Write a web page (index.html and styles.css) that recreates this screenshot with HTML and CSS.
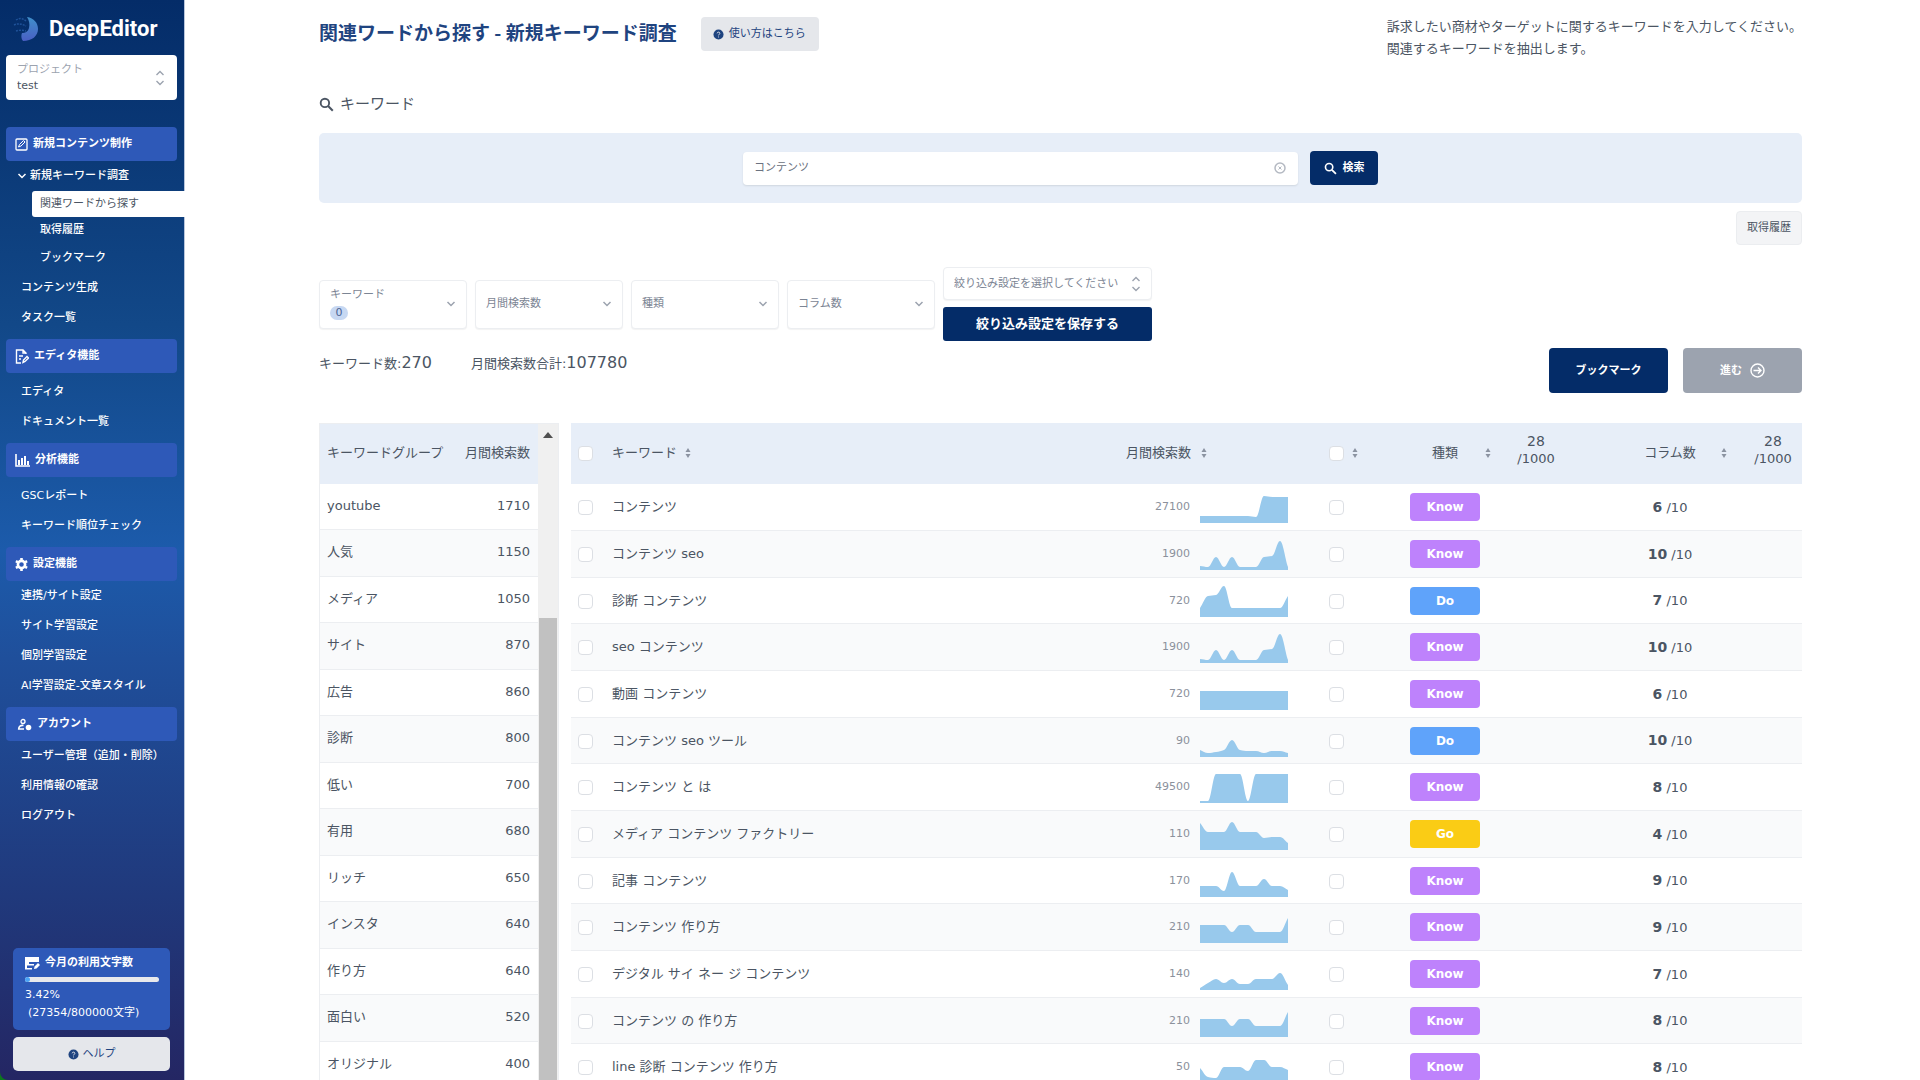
FILE: index.html
```html
<!DOCTYPE html>
<html lang="ja">
<head>
<meta charset="utf-8">
<title>DeepEditor - 新規キーワード調査</title>
<meta name="viewport" content="width=device-width, initial-scale=1">
<link rel="stylesheet" href="styles.css">
</head>
<body>
<svg class="sprite" aria-hidden="true">
  <symbol id="i-updown" viewBox="0 0 10 16"><path d="M1.5 5 5 1.500 8.500 5M1.500 11 5 14.500 8.500 11" fill="none" stroke="currentColor" stroke-width="1.400"/></symbol>
  <symbol id="i-chevron" viewBox="0 0 10 10"><path d="M1.500 3 5 6.500 8.500 3" fill="none" stroke="currentColor" stroke-width="1.500"/></symbol>
  <symbol id="i-search" viewBox="0 0 16 16"><circle cx="6.300" cy="6.300" r="4.500" fill="none" stroke="currentColor" stroke-width="2"/><path d="m9.700 9.700 5 5" stroke="currentColor" stroke-width="2.200"/></symbol>
  <symbol id="i-help" viewBox="0 0 12 12"><circle cx="6" cy="6" r="5.500" fill="currentColor"/><path d="M4.500 4.700C4.600 3 7.500 3 7.500 4.700 7.500 5.700 6 5.800 6 7M6 8.200v1" fill="none" stroke="#e5e7eb" stroke-width="1"/></symbol>
  <symbol id="i-sort" viewBox="0 0 8 12"><path d="M4 1 6.500 5h-5zM4 11 6.500 7h-5z" fill="currentColor"/></symbol>
</svg>
<div class="layout">
  <aside class="sidebar">
    <a class="logo" href="#">
      <svg width="28" height="28" viewBox="0 0 28 28" aria-hidden="true">
        <defs><linearGradient id="lg" x1="0" y1="0" x2="0" y2="1"><stop offset="0" stop-color="#3f8fca"/><stop offset="1" stop-color="#4a5fc4"/></linearGradient></defs>
        <path d="M15 2c7 1 11 6 11 12 0 7-6 12-15 12-2-2-2-6-1-8 3 0 6-1 7-5 1-4 0-8-2-11z" fill="url(#lg)"/>
        <path d="M4 5c3-2 7-2 10 1M2 10c4-2 8-1 12 1M4 16c3-1 7-1 10 0" fill="none" stroke="#1f5299" stroke-width="1.500" stroke-dasharray="2 1"/>
      </svg>
      <span>DeepEditor</span>
    </a>
    <div class="project">
      <label for="project">プロジェクト</label>
      <select id="project"><option>test</option></select>
      <svg class="project-icon" width="10" height="16"><use href="#i-updown"/></svg>
    </div>
    <nav class="menu">
      <section class="group">
        <h2><svg width="13" height="13" viewBox="0 0 13 13"><rect x="1" y="1" width="11" height="11" rx="1" fill="none" stroke="currentColor" stroke-width="1.300"/><path d="m3.500 9 1-2.500 4-4 1.500 1.500-4 4z" fill="none" stroke="currentColor"/></svg>新規コンテンツ制作</h2>
        <a class="parent" href="#"><svg width="10" height="10"><use href="#i-chevron"/></svg>新規キーワード調査</a>
        <a class="sub active" href="#">関連ワードから探す</a>
        <a class="sub compact" href="#">取得履歴</a>
        <a class="sub" href="#">ブックマーク</a>
        <a href="#">コンテンツ生成</a>
        <a href="#">タスク一覧</a>
      </section>
      <section class="group spaced">
        <h2><svg width="14" height="15" viewBox="0 0 14 15"><path d="M11 5V4L8 1H1.500v13H6M8 1v3h3M4 7h4M4 10h2M8 13.500l.5-2.500L12 7.500l1.500 1.500L10 12.500z" fill="none" stroke="currentColor" stroke-width="1.400"/></svg>エディタ機能</h2>
        <a href="#">エディタ</a>
        <a href="#">ドキュメント一覧</a>
      </section>
      <section class="group spaced">
        <h2><svg width="15" height="13" viewBox="0 0 15 13"><path d="M1 0v12h14" fill="none" stroke="currentColor" stroke-width="1.600"/><path d="M3 6h2v5H3zM6 4h2v7H6zM9 2h2v9H9zM12 7h2v4h-2z" fill="currentColor"/></svg>分析機能</h2>
        <a href="#">GSCレポート</a>
        <a href="#">キーワード順位チェック</a>
      </section>
      <section class="group">
        <h2><svg width="13" height="13" viewBox="0 0 13 13"><circle cx="6.500" cy="6.500" r="3.600" fill="none" stroke="currentColor" stroke-width="2.600"/><path d="M6.500 0v2M6.500 11v2M.9 3.200l1.800 1M10.300 8.800l1.800 1M.9 9.800l1.800-1M10.300 4.200l1.800-1" stroke="currentColor" stroke-width="2.600"/></svg>設定機能</h2>
        <a href="#">連携/サイト設定</a>
        <a href="#">サイト学習設定</a>
        <a href="#">個別学習設定</a>
        <a href="#">AI学習設定-文章スタイル</a>
      </section>
      <section class="group">
        <h2><svg width="17" height="13" viewBox="0 0 17 13"><circle cx="8" cy="3.500" r="2" fill="none" stroke="currentColor" stroke-width="1.300"/><path d="M9 11H3.700C3.700 8.500 5.500 7 8.500 7.500" fill="none" stroke="currentColor" stroke-width="1.600"/><circle cx="13.500" cy="9.500" r="2.800" fill="currentColor"/></svg>アカウント</h2>
        <a href="#">ユーザー管理（追加・削除）</a>
        <a href="#">利用情報の確認</a>
        <a href="#">ログアウト</a>
      </section>
    </nav>
    <div class="usage">
      <h3><svg width="15" height="13" viewBox="0 0 15 13"><path d="M0 0h14v5H4v2h5v1.500H2V11h5v1.500H0zM9 12l.5-2.500L13 6l2 2-3.500 3.500z" fill="currentColor"/></svg>今月の利用文字数</h3>
      <progress value="27354" max="800000" aria-label="今月の利用文字数"></progress>
      <p>3.42%</p>
      <p class="detail">(27354/800000文字)</p>
    </div>
    <button class="help" type="button"><svg width="11" height="11"><use href="#i-help"/></svg>ヘルプ</button>
  </aside>

  <main class="main">
    <header class="head">
      <h1>関連ワードから探す - 新規キーワード調査</h1>
      <button class="howto" type="button"><svg width="11" height="11"><use href="#i-help"/></svg>使い方はこちら</button>
      <p>訴求したい商材やターゲットに関するキーワードを入力してください。<br>関連するキーワードを抽出します。</p>
    </header>

    <label class="search-label" for="q"><svg width="15" height="15"><use href="#i-search"/></svg>キーワード</label>
    <form class="search">
      <div class="search-box">
        <input id="q" type="text" value="コンテンツ">
        <button type="reset" aria-label="クリア"><svg width="12" height="12" viewBox="0 0 12 12"><circle cx="6" cy="6" r="5" fill="none" stroke="currentColor" stroke-width="1.500"/><path d="m4.500 4.500 3 3m0-3-3 3" stroke="currentColor"/></svg></button>
      </div>
      <button class="search-btn" type="button"><svg width="13" height="13"><use href="#i-search"/></svg>検索</button>
    </form>
    <div class="history"><button type="button">取得履歴</button></div>

    <div class="filters">
      <button class="filter keyword" type="button" aria-haspopup="true">
        <span class="filter-name">キーワード</span>
        <span class="count">0</span>
        <svg width="10" height="10"><use href="#i-chevron"/></svg>
      </button>
      <div class="filter"><select aria-label="月間検索数"><option>月間検索数</option></select><svg width="10" height="10"><use href="#i-chevron"/></svg></div>
      <div class="filter"><select aria-label="種類"><option>種類</option></select><svg width="10" height="10"><use href="#i-chevron"/></svg></div>
      <div class="filter"><select aria-label="コラム数"><option>コラム数</option></select><svg width="10" height="10"><use href="#i-chevron"/></svg></div>
      <div class="preset">
        <div class="filter low"><select aria-label="絞り込み設定"><option>絞り込み設定を選択してください</option></select><svg width="10" height="16"><use href="#i-updown"/></svg></div>
        <button class="save" type="button">絞り込み設定を保存する</button>
      </div>
    </div>

    <div class="summary">
      <p>キーワード数:<span>270</span></p>
      <p>月間検索数合計:<span>107780</span></p>
      <button class="bookmark" type="button">ブックマーク</button>
      <button class="next" type="button" disabled>進む<svg width="15" height="15" viewBox="0 0 15 15"><circle cx="7.500" cy="7.500" r="6.500" fill="none" stroke="currentColor" stroke-width="1.400"/><path d="M3.500 7.500h7.500M8 4.500l3 3-3 3" fill="none" stroke="currentColor" stroke-width="1.400"/></svg></button>
    </div>

    <div class="tables">
      <div class="groups">
        <table>
          <thead><tr><th scope="col">キーワードグループ</th><th scope="col" class="num">月間検索数</th></tr></thead>
          <tbody id="group-rows"></tbody>
        </table>
        <div class="track" aria-hidden="true">
          <svg width="10" height="6" viewBox="0 0 10 6"><path d="M5 0l5 6H0z" fill="#505050"/></svg>
          <div class="thumb"></div>
        </div>
      </div>
      <table class="keywords">
        <colgroup><col class="c-check"><col><col class="c-vol"><col class="c-spark"><col class="c-mark"><col class="c-type"><col class="c-type-n"><col class="c-columns"><col class="c-columns-n"></colgroup>
        <thead>
          <tr>
            <th class="check"><input type="checkbox" aria-label="すべて選択"></th>
            <th scope="col">キーワード<svg class="sort" width="8" height="12"><use href="#i-sort"/></svg></th>
            <th scope="col" class="num">月間検索数</th>
            <th class="spark"><svg class="sort" width="8" height="12"><use href="#i-sort"/></svg></th>
            <th class="mark"><input type="checkbox" aria-label="すべてマーク"><svg class="sort" width="8" height="12"><use href="#i-sort"/></svg></th>
            <th scope="col"><div class="sorted">種類<svg class="sort" width="8" height="12"><use href="#i-sort"/></svg></div></th>
            <th class="total first"><b>28</b>/1000</th>
            <th scope="col"><div class="sorted wide">コラム数<svg class="sort" width="8" height="12"><use href="#i-sort"/></svg></div></th>
            <th class="total"><b>28</b>/1000</th>
          </tr>
        </thead>
        <tbody id="keyword-rows"></tbody>
      </table>
    </div>
  </main>
</div>
<script src="app.js"></script>
</body>
</html>
```

FILE: app.js
```js
const groups = [
  ["youtube", 1710], ["人気", 1150], ["メディア", 1050], ["サイト", 870], ["広告", 860],
  ["診断", 800], ["低い", 700], ["有用", 680], ["リッチ", 650], ["インスタ", 640],
  ["作り方", 640], ["面白い", 520], ["オリジナル", 400]
];

const keywords = [
  ["コンテンツ", 27100, "Know", 6, [7, 7, 7, 7, 7, 7, 7, 6, 27, 26, 26, 26]],
  ["コンテンツ seo", 1900, "Know", 10, [4, 3, 13, 3, 13, 3, 3, 3, 13, 14, 29, 3]],
  ["診断 コンテンツ", 720, "Do", 7, [9, 21, 22, 31, 9, 9, 9, 9, 9, 9, 9, 21]],
  ["seo コンテンツ", 1900, "Know", 10, [4, 3, 13, 3, 13, 3, 3, 3, 13, 14, 29, 3]],
  ["動画 コンテンツ", 720, "Know", 6, [19, 19, 19, 19, 19, 19, 19, 19, 19, 19, 19, 19]],
  ["コンテンツ seo ツール", 90, "Do", 10, [7, 4, 5, 7, 17, 7, 6, 6, 4, 6, 6, 4]],
  ["コンテンツ と は", 49500, "Know", 8, [2, 2, 29, 29, 29, 29, 2, 29, 29, 29, 29, 29]],
  ["メディア コンテンツ ファクトリー", 110, "Go", 4, [27, 18, 18, 18, 28, 18, 18, 18, 12, 13, 13, 7]],
  ["記事 コンテンツ", 170, "Know", 9, [11, 11, 11, 6, 25, 11, 11, 11, 18, 11, 11, 7]],
  ["コンテンツ 作り方", 210, "Know", 9, [18, 18, 18, 18, 11, 18, 18, 11, 11, 11, 11, 25]],
  ["デジタル サイ ネー ジ コンテンツ", 140, "Know", 7, [2, 7, 11, 7, 11, 6, 6, 11, 11, 11, 17, 5]],
  ["コンテンツ の 作り方", 210, "Know", 8, [18, 18, 18, 18, 11, 18, 18, 11, 11, 11, 11, 25]],
  ["line 診断 コンテンツ 作り方", 50, "Know", 8, [15, 6, 5, 16, 16, 16, 12, 23, 23, 16, 16, 13]]
];

// Smooth area path through twelve monthly values, eight pixels apart.
// Slopes are level at peaks, and zero slope is not forced at either end.
function area(values) {
  const base = 32;
  const last = values.length - 1;
  const slope = values.map((v, i) => {
    if (i === 0) return values[1] - v;
    if (i === last) return v - values[i - 1];
    const before = v - values[i - 1];
    const after = values[i + 1] - v;
    return before * after <= 0 ? 0 : (2 * before * after) / (before + after);
  });
  let d = `M0 ${base}V${base - values[0]}`;
  for (let i = 1; i <= last; i++) {
    const x = i * 8;
    const y1 = base - values[i - 1] - slope[i - 1] / 3;
    const y2 = base - values[i] + slope[i] / 3;
    d += `C${x - 5} ${y1} ${x - 3} ${y2} ${x} ${base - values[i]}`;
  }
  return d + `V${base}Z`;
}

document.getElementById("group-rows").innerHTML = groups
  .map(([name, n]) => `<tr><td>${name}</td><td class="num">${n}</td></tr>`)
  .join("");

document.getElementById("keyword-rows").innerHTML = keywords
  .map(([name, n, type, score, trend]) => `<tr>
    <td class="check"><input type="checkbox" aria-label="${name}"></td>
    <td>${name}</td>
    <td class="num small">${n}</td>
    <td class="spark"><svg width="88" height="32" viewBox="0 0 88 32"><path d="${area(trend)}"/></svg></td>
    <td class="mark"><input type="checkbox" aria-label="${name} をマーク"></td>
    <td class="type"><span class="badge ${type.toLowerCase()}">${type}</span></td>
    <td></td>
    <td class="score"><b>${score}</b> /10</td>
    <td></td>
  </tr>`)
  .join("");
```

FILE: styles.css
```css
* { box-sizing: border-box; }
body, h1, h2, h3, p { margin: 0; }
body {
  font: 13px/20px "DejaVu Sans", "Noto Sans CJK JP", sans-serif;
  color: #4b5563;
  background: #fff;
}
button, input, select { font: inherit; color: inherit; }
button { border: 0; padding: 0; cursor: pointer; }
select { appearance: none; border: 0; background: none; }
a { color: inherit; text-decoration: none; }
svg { flex: none; }
.sprite { display: none; }

.layout {
  display: flex;
  height: 100vh;
  overflow: hidden;
  background: #0c7a1c;
}

/* Sidebar */
.sidebar {
  flex: none;
  display: flex;
  flex-direction: column;
  width: 185px;
  padding: 12px 0 9px;
  border-right: 1px solid #b9c6dc;
  border-bottom-left-radius: 8px;
  background: linear-gradient(#042c68, #124888 30%, #1c5bab 51%, #1f4f9b 61%, #20397c 83%, #242663);
  color: #fff;
  font-size: 11px;
}
.logo {
  display: flex;
  align-items: center;
  gap: 9px;
  height: 34px;
  padding-left: 12px;
  font: bold 22px/34px Roboto, sans-serif;
}
.project {
  display: grid;
  grid-template-columns: 1fr auto;
  align-content: center;
  align-items: center;
  height: 45px;
  margin: 9px 7px 27px 6px;
  padding: 0 12px 0 11px;
  border-radius: 4px;
  background: #fff;
  color: #4b5563;
  line-height: 16px;
}
.project label { color: #9ca3af; }
.project select { grid-row: 2; width: 100%; padding: 0; }
.project-icon { grid-area: 1 / 2 / 3 / 3; color: #9ca3af; }
.menu { flex: 1; font-weight: 500; }
.group { display: flex; flex-direction: column; margin-bottom: 6px; }
.group h2 {
  display: flex;
  align-items: center;
  gap: 5px;
  height: 34px;
  margin: 0 7px 0 6px;
  padding-left: 9px;
  border-radius: 4px;
  background: #2e59b8;
  font-size: 11px;
}
.group a { padding-left: 21px; line-height: 30px; white-space: nowrap; }
.group .parent { display: flex; align-items: center; gap: 3px; padding-left: 17px; }
.group .sub { padding-left: 40px; }
.group .compact { line-height: 26px; }
.group .active {
  margin: 0 -1px 0 32px;
  padding-left: 8px;
  border-radius: 3px 0 0 3px;
  background: #fff;
  color: #4b5563;
  font-weight: 400;
  line-height: 26px;
}
.spaced h2 { margin-bottom: 4px; }
.usage {
  margin: 0 14px 7px 13px;
  padding: 6px 11px 8px 12px;
  border-radius: 5px;
  background: #2e59b8;
  line-height: 18px;
}
.usage h3 { display: flex; align-items: center; gap: 5px; font-size: 11px; line-height: 18px; }
.usage progress {
  appearance: none;
  display: block;
  width: 100%;
  height: 5px;
  margin: 5px 0 4px;
  border: 0;
}
.usage progress::-webkit-progress-bar { border-radius: 3px; background: #e8e9ec; }
.usage progress::-webkit-progress-value { border-radius: 3px; background: #4ba3f5; }
.usage .detail { padding-left: 3px; white-space: nowrap; }
.help {
  display: flex;
  align-items: center;
  justify-content: center;
  gap: 4px;
  height: 34px;
  margin: 0 14px 0 13px;
  border-radius: 5px;
  background: #e5e7eb;
  color: #1f4480;
}

/* Main column */
.main {
  flex: 1;
  min-width: 0;
  overflow: hidden;
  padding: 15px 118px 0 134px;
  background: #fff;
}
.head { display: flex; align-items: flex-start; gap: 24px; }
.head h1 {
  color: #1f4480;
  font-family: "Noto Sans CJK JP", sans-serif;
  font-size: 19px;
  line-height: 34px;
  white-space: nowrap;
}
.head p { margin: 1px 0 0 auto; line-height: 22px; }
.howto {
  display: flex;
  align-items: center;
  gap: 5px;
  height: 34px;
  margin-top: 2px;
  padding: 0 13px 0 12px;
  border-radius: 4px;
  background: #e5e7eb;
  color: #1f4480;
  font-size: 11px;
}
.search-label {
  display: flex;
  align-items: center;
  gap: 6px;
  margin: 33px 0 18px;
  font-size: 15px;
  line-height: 22px;
}
.search {
  display: flex;
  align-items: center;
  justify-content: center;
  gap: 12px;
  height: 70px;
  border-radius: 5px;
  background: #e7eef8;
  font-size: 11px;
}
.search-box {
  display: flex;
  align-items: center;
  width: 555px;
  height: 33px;
  padding: 0 12px 0 11px;
  border-radius: 4px;
  background: #fff;
  box-shadow: 0 1px 2px rgba(0, 0, 0, .1);
}
.search-box input { flex: 1; min-width: 0; padding: 0; border: 0; outline: 0; color: #6b7280; }
.search-box button { display: flex; background: none; color: #b4b9c2; }
.search-btn, .save, .bookmark, .next {
  display: flex;
  align-items: center;
  justify-content: center;
  border-radius: 4px;
  background: #042c68;
  color: #fff;
  font-weight: 700;
}
.search-btn { gap: 6px; width: 68px; height: 34px; }
.history { display: flex; justify-content: flex-end; margin: 8px 0 22px; }
.history button {
  height: 34px;
  padding: 0 10px;
  border: 1px solid #ebedf0;
  border-radius: 4px;
  background: #f3f4f6;
  font-size: 11px;
}

.filters { display: flex; align-items: center; gap: 8px; font-size: 11px; color: #7c8594; }
.filter {
  display: grid;
  grid-template-columns: 1fr auto;
  align-items: center;
  width: 148px;
  height: 49px;
  padding-right: 10px;
  border: 1px solid #eceef1;
  border-radius: 4px;
  background: #fff;
  box-shadow: 0 1px 1px rgba(0, 0, 0, .05);
}
.filter select { grid-area: 1 / 1 / 2 / 3; height: 100%; padding: 0 0 0 10px; outline: 0; }
.filter svg { grid-area: 1 / 2 / 2 / 3; color: #9ca3af; pointer-events: none; }
.keyword { padding-left: 10px; line-height: 14px; text-align: left; align-content: center; row-gap: 4px; }
.keyword .count {
  grid-row: 2;
  width: 18px;
  border-radius: 8px;
  background: #c7d8f2;
  color: #4b6594;
  text-align: center;
}
.filter.keyword svg { grid-row: 1 / 3; }
.preset { display: flex; flex-direction: column; gap: 7px; width: 209px; }
.filter.low { width: 100%; height: 33px; }
.save { height: 34px; border-radius: 3px; font-size: 13px; }

.summary { display: flex; align-items: flex-start; gap: 15px; margin: 7px 0 30px; }
.summary p { margin-right: 24px; line-height: 30px; }
.summary span { font-size: 16px; }
.bookmark, .next { width: 119px; height: 45px; font-size: 11px; }
.bookmark { margin-left: auto; }
.next { gap: 8px; background: #9ca3af; cursor: default; }

/* Tables */
.tables { display: flex; align-items: flex-start; gap: 12px; }
table { border-collapse: separate; border-spacing: 0; }
th { height: 61px; padding: 0 0 2px; background: #e7eef8; font-weight: 400; text-align: left; }
td { padding: 0; border-bottom: 1px solid #eceef1; }
tbody tr { height: 47px; }
tbody tr:nth-child(even) { background: #f9fafb; }
.num { text-align: right; }
.groups { flex: none; display: flex; width: 240px; border: 1px solid #eceef1; border-width: 1px 1px 0; }
.groups table { flex: 1; }
.groups th { height: 60px; }
.groups tbody tr:nth-child(odd) { height: 46px; }
.groups th:first-child, .groups td:first-child { padding-left: 7px; }
.groups .num { padding-right: 8px; }
.groups td { padding-bottom: 2px; }
.track {
  display: flex;
  flex-direction: column;
  align-items: center;
  width: 20px;
  padding: 8px 1px 0;
  background: #f0f0f0;
}
.thumb { flex: 1; align-self: stretch; margin-top: 180px; background: #c1c1c1; }

.keywords { flex: 1; table-layout: fixed; min-width: 0; }
.keywords tbody tr:nth-child(3n) { height: 46px; }
.c-check { width: 41px; }
.c-vol { width: 90px; }
.c-spark { width: 100px; }
.c-mark { width: 90px; }
.c-type { width: 110px; }
.c-type-n { width: 96px; }
.c-columns { width: 148px; }
.c-columns-n { width: 58px; }
.keywords .check { padding-left: 7px; }
.keywords .mark { padding-left: 29px; }
.keywords th.num { padding-right: 9px; }
.keywords td.num { padding-right: 10px; }
.keywords .small { color: #8b919c; font-size: 11px; }
.keywords input {
  appearance: none;
  display: inline-block;
  width: 15px;
  height: 15px;
  margin: 0;
  border: 1px solid #dcdfe4;
  border-radius: 4px;
  background: #fff;
  vertical-align: middle;
}
.sort { margin-left: 7px; color: #8b93a1; vertical-align: middle; }
.spark .sort { margin-left: 0; }
.spark svg { display: block; }
.spark path { fill: #98c9ec; }
.sorted { display: grid; grid-template-columns: 1fr auto 1fr; align-items: center; padding: 0 8px; }
.sorted::before { content: ""; }
.sorted.wide { padding: 0 16px; }
.sorted .sort { justify-self: end; margin: 0; }
.total { padding-bottom: 8px; font-size: 13px; line-height: 17px; text-align: center; }
.total.first { padding-right: 24px; }
.total b { display: block; font-size: 14px; font-weight: 400; }
.type, .score { text-align: center; }
.badge {
  display: inline-block;
  width: 70px;
  border-radius: 4px;
  color: #fff;
  font-size: 12px;
  font-weight: 700;
  line-height: 28px;
  vertical-align: middle;
}
.know { background: #be82fc; }
.do { background: #5fa3fa; }
.go { background: #facc15; }
.score b { font-size: 14px; }
```
